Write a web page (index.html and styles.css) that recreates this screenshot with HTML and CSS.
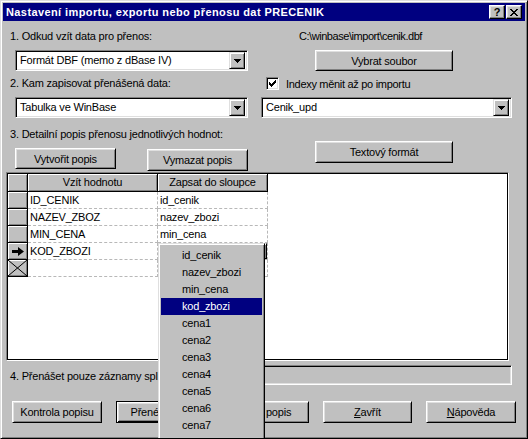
FILE: index.html
```html
<!DOCTYPE html>
<html lang="cs">
<head>
<meta charset="utf-8">
<title>Nastavení importu</title>
<link rel="stylesheet" href="styles.css">
</head>
<body>
<div class="window">
  <div class="titlebar">
    <span class="title">Nastavení importu, exportu nebo přenosu dat PRECENIK</span>
    <div class="tbtns">
      <span class="tbtn">?</span>
      <span class="tbtn"><svg width="8" height="7" viewBox="0 0 8 7"><path d="M0 0h2v1h-2z M6 0h2v1h-2z M1 1h2v1h-2z M5 1h2v1h-2z M2 2h4v1h-4z M3 3h2v1h-2z M2 4h4v1h-4z M1 5h2v1h-2z M5 5h2v1h-2z M0 6h2v1h-2z M6 6h2v1h-2z" fill="#000"/></svg></span>
    </div>
  </div>
  <div class="content">
    <div class="row r1">
      <div class="col"><span class="lbl">1. Odkud vzít data pro přenos:</span></div>
      <div class="col"><span class="path">C:\winbase\import\cenik.dbf</span></div>
    </div>
    <div class="row r2">
      <div class="col">
        <div class="combo c-left"><span class="ctext">Formát DBF (memo z dBase IV)</span><span class="cbtn"><svg width="7" height="4" viewBox="0 0 7 4"><path d="M0 0h7v1H0z M1 1h5v1H1z M2 2h3v1H2z M3 3h1v1H3z" fill="#000"/></svg></span></div>
      </div>
      <div class="col"><button class="btn btn-wide">Vybrat soubor</button></div>
    </div>
    <div class="row r3">
      <div class="col"><span class="lbl">2. Kam zapisovat přenášená data:</span></div>
      <div class="col">
        <label class="check"><span class="cbox"><svg width="7" height="7" viewBox="0 0 7 7"><path d="M6 0h1v3h-1z M5 1h1v3h-1z M4 2h1v3h-1z M3 3h1v3h-1z M2 4h1v3h-1z M1 3h1v3h-1z M0 2h1v3h-1z" fill="#000"/></svg></span><span class="ctext2">Indexy měnit až po importu</span></label>
      </div>
    </div>
    <div class="row r4">
      <div class="col">
        <div class="combo c-left"><span class="ctext">Tabulka ve WinBase</span><span class="cbtn"><svg width="7" height="4" viewBox="0 0 7 4"><path d="M0 0h7v1H0z M1 1h5v1H1z M2 2h3v1H2z M3 3h1v1H3z" fill="#000"/></svg></span></div>
      </div>
      <div class="col">
        <div class="combo c-right"><span class="ctext ctext-r">Cenik_upd</span><span class="cbtn"><svg width="7" height="4" viewBox="0 0 7 4"><path d="M0 0h7v1H0z M1 1h5v1H1z M2 2h3v1H2z M3 3h1v1H3z" fill="#000"/></svg></span></div>
      </div>
    </div>
    <div class="row sec3">
      <div class="col">
        <span class="lbl">3. Detailní popis přenosu jednotlivých hodnot:</span>
        <div class="btnrow">
          <button class="btn btn-mid">Vytvořit popis</button>
          <button class="btn btn-mid btn-second">Vymazat popis</button>
        </div>
      </div>
      <div class="col"><button class="btn btn-wide btn-text">Textový formát</button></div>
    </div>

    <div class="dbgrid">
      <div class="gridcells">
        <div class="fixed"></div>
        <div class="fixed head">Vzít hodnotu</div>
        <div class="fixed head">Zapsat do sloupce</div>

        <div class="fixed"></div>
        <div class="cell">ID_CENIK</div>
        <div class="cell">id_cenik</div>

        <div class="fixed"></div>
        <div class="cell">NAZEV_ZBOZ</div>
        <div class="cell">nazev_zbozi</div>

        <div class="fixed"></div>
        <div class="cell">MIN_CENA</div>
        <div class="cell">min_cena</div>

        <div class="fixed ind"><svg width="12" height="9" viewBox="0 0 12 9"><path d="M0 3h6v-3l6 4.5-6 4.5v-3h-6z" fill="#000"/></svg></div>
        <div class="cell">KOD_ZBOZI</div>
        <div class="cell cell-edit"><span class="cbtn cbtn-small"></span></div>

        <div class="fixed ind"><svg width="19" height="16" viewBox="0 0 19 16"><path d="M0 0L19 16M19 0L0 16" stroke="#000" stroke-width="1" fill="none"/></svg></div>
        <div class="cell"></div>
        <div class="cell"></div>
      </div>
    </div>

    <div class="row r5">
      <span class="lbl lbl4">4. Přenášet pouze záznamy splňující podmínku:</span>
      <div class="edit"></div>
    </div>

    <div class="row bottom">
      <button class="btn b-1">Kontrola popisu</button>
      <button class="btn b-2 default">Přenést data</button>
      <button class="btn b-3">Uložit popis</button>
      <button class="btn b-4"><u>Z</u>avřít</button>
      <button class="btn b-5"><u>N</u>ápověda</button>
    </div>
  </div>

  <div class="popup">
    <div class="item">id_cenik</div>
    <div class="item">nazev_zbozi</div>
    <div class="item">min_cena</div>
    <div class="item sel">kod_zbozi</div>
    <div class="item">cena1</div>
    <div class="item">cena2</div>
    <div class="item">cena3</div>
    <div class="item">cena4</div>
    <div class="item">cena5</div>
    <div class="item">cena6</div>
    <div class="item">cena7</div>
    <div class="item">cena8</div>
  </div>
</div>
</body>
</html>
```

FILE: styles.css
```css
* { box-sizing: border-box; }

body {
  margin: 0;
  font-family: "Liberation Sans", Arial, sans-serif;
  font-size: 11px;
  letter-spacing: -0.2px;
  color: #000;
  background: #c0c0c0;
}

.window {
  position: relative;
  width: 528px;
  height: 439px;
  background: #c0c0c0;
  border: 1px solid;
  border-color: #dfdfdf #000 #000 #dfdfdf;
  box-shadow: inset 1px 1px #fff, inset -1px -1px #808080;
  padding: 2px;
  overflow: hidden;
}

.titlebar {
  height: 18px;
  background: #000080;
  color: #fff;
  display: flex;
  align-items: center;
  padding: 0 3px 0 3px;
  font-weight: bold;
  font-size: 11px;
}
.title { letter-spacing: 0.4px; white-space: nowrap; }

.tbtns {
  margin-left: auto;
  display: flex;
  gap: 1px;
}

.tbtn {
  width: 16px;
  height: 14px;
  background: #c0c0c0;
  border: 1px solid;
  border-color: #fff #000 #000 #fff;
  box-shadow: inset -1px -1px #808080, inset 1px 1px #dfdfdf;
  display: flex;
  align-items: center;
  justify-content: center;
  color: #000;
  font-weight: bold;
  font-size: 11px;
  line-height: 12px;
  letter-spacing: 0;
}

.content {
  padding: 9px 0 0 7px;
}

.row { display: flex; }
.col { width: 251px; flex: none; }

.lbl { line-height: 13px; display: block; white-space: nowrap; }

.r1 { height: 13px; line-height: 13px; }
.path { display: block; margin-left: 38px; letter-spacing: -0.45px; white-space: nowrap; }

.r2 { margin-top: 7px; height: 21px; }
.r3 { margin-top: 5px; height: 15px; align-items: center; }
.r3 .lbl { line-height: 15px; }
.r4 { margin-top: 6px; height: 21px; }

.combo {
  height: 21px;
  background: #fff;
  border: 1px solid;
  border-color: #808080 #fff #fff #808080;
  box-shadow: inset 1px 1px #000, inset -1px -1px #dfdfdf;
  display: flex;
  align-items: center;
  padding: 2px;
}
.c-left { margin-left: 5px; width: 233px; }
.c-right { width: 251px; }
.ctext { padding-left: 2px; white-space: nowrap; line-height: 17px; }

.cbtn {
  margin-left: auto;
  width: 16px;
  height: 17px;
  flex: none;
  background: #c0c0c0;
  border: 1px solid;
  border-color: #dfdfdf #000 #000 #dfdfdf;
  box-shadow: inset 1px 1px #fff, inset -1px -1px #808080;
  display: flex;
  align-items: center;
  justify-content: center;
}

.btn {
  font-family: "Liberation Sans", Arial, sans-serif;
  font-size: 11px;
  letter-spacing: -0.2px;
  color: #000;
  background: #c0c0c0;
  border: 1px solid;
  border-color: #fff #000 #000 #fff;
  box-shadow: inset 1px 1px #dfdfdf, inset -1px -1px #808080;
  padding: 0;
  margin: 0;
  height: 22px;
  display: flex;
  align-items: center;
  justify-content: center;
  white-space: nowrap;
}

.btn-wide { margin-left: 54px; width: 138px; height: 21px; }
.btn-text { margin-top: 13px; height: 22px; }

.check { display: flex; align-items: center; margin-left: 5px; height: 15px; }
.cbox {
  width: 13px;
  height: 13px;
  background: #fff;
  border: 1px solid;
  border-color: #808080 #fff #fff #808080;
  box-shadow: inset 1px 1px #000, inset -1px -1px #dfdfdf;
  display: flex;
  align-items: center;
  justify-content: center;
  flex: none;
}
.ctext2 { margin-left: 7px; white-space: nowrap; letter-spacing: -0.3px; }

.sec3 { margin-top: 10px; align-items: flex-start; }
.btnrow { display: flex; align-items: flex-start; margin-top: 7px; }
.btn-mid { width: 101px; height: 21px; margin-left: 5px; }
.btn-second { margin-left: 31px; margin-top: 1px; height: 22px; }

.dbgrid {
  margin-top: 1px;
  margin-left: -4px;
  width: 503px;
  height: 189px;
  border: 1px solid;
  border-color: #808080 #fff #fff #808080;
  box-shadow: inset 1px 1px #000, inset -1px -1px #000;
  background: #fff;
  padding: 1px;
}

.gridcells {
  display: grid;
  grid-template-columns: 20px 130px 110px;
  grid-template-rows: 18px;
  grid-auto-rows: 17px;
}

.fixed {
  background: #c0c0c0;
  border-right: 1px solid #000;
  border-bottom: 1px solid #000;
  box-shadow: inset 1px 1px #fff, inset -1px -1px #808080;
  display: flex;
  align-items: center;
  justify-content: center;
}
.head { line-height: 17px; white-space: nowrap; }
.ind svg { display: block; }

.cell {
  border-right: 1px dashed #b8b8b8;
  border-bottom: 1px dashed #b8b8b8;
  padding-left: 2px;
  line-height: 16px;
  white-space: nowrap;
  overflow: hidden;
}
.cell-edit { display: flex; justify-content: flex-end; padding: 0; }
.cbtn-small { height: 16px; }

.r5 { margin-top: 4px; height: 20px; width: 502px; align-items: center; }
.lbl4 { padding-top: 3px; }
.edit {
  margin-left: auto;
  width: 270px;
  height: 20px;
  background: #c0c0c0;
  border: 1px solid;
  border-color: #808080 #fff #fff #808080;
  box-shadow: inset 1px 1px #000, inset -1px -1px #dfdfdf;
  flex: none;
}

.bottom { margin-top: 16px; margin-left: 2px; gap: 14px; }
.b-1 { width: 90px; }
.b-2 { width: 89px; }
.b-3 { width: 90px; }
.b-4 { width: 89px; }
.b-5 { width: 90px; }
.default {
  border: 1px solid #000;
  box-shadow: inset 1px 1px #fff, inset -1px -1px #000, inset 2px 2px #dfdfdf, inset -2px -2px #808080;
}

.popup {
  position: absolute;
  left: 157px;
  top: 242px;
  width: 107px;
  height: 210px;
  background: #c0c0c0;
  border: 1px solid;
  border-color: #dfdfdf #000 #000 #dfdfdf;
  box-shadow: inset 1px 1px #fff, inset -1px -1px #808080;
  padding: 3px 2px 0 2px;
}

.item {
  height: 17px;
  line-height: 17px;
  padding-left: 21px;
  white-space: nowrap;
}
.item.sel { background: #000080; color: #fff; }
```
